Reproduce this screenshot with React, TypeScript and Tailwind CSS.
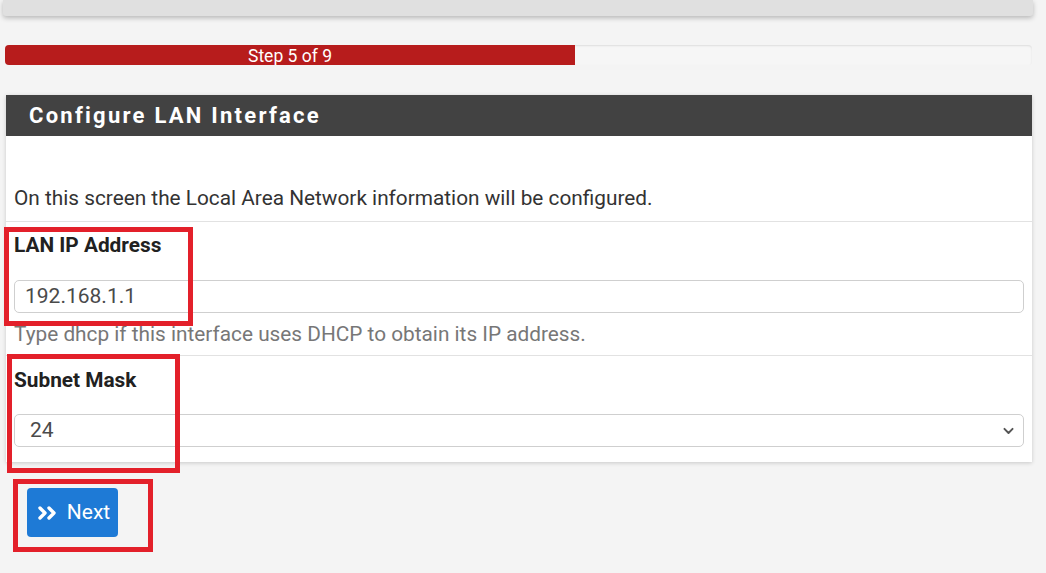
import React from "react";

export default function App() {
  return (
    <div
      className="relative w-full min-h-[573px] bg-[#f4f4f4] overflow-hidden"
      style={{ fontFamily: "Roboto, 'Liberation Sans', sans-serif" }}
    >
      {/* top bar */}
      <div className="ml-[3px] mr-[13px] h-[16px] bg-[#e0e0e0] rounded-b-[3px] shadow-[0_2px_5px_rgba(0,0,0,0.25)]" />

      {/* progress */}
      <div className="ml-[5px] mr-[14px] mt-[29px] h-[20px] rounded-[4px] bg-[#f6f6f6] shadow-[inset_0_1px_2px_rgba(0,0,0,0.1)] overflow-hidden flex">
        <div className="w-[570px] h-full bg-[#b71c1c] flex items-center justify-center pt-[4px] text-white text-[17.5px] leading-none">
          Step 5 of 9
        </div>
      </div>

      {/* panel */}
      <div className="ml-[6px] mr-[14px] mt-[30px] bg-white shadow-[0_1px_4px_rgba(0,0,0,0.18)]">
        <div className="h-[41px] bg-[#424242] flex items-center pl-[23px]">
          <span className="text-white text-[22px] font-bold tracking-[2.25px] leading-none">
            Configure LAN Interface
          </span>
        </div>
        <div className="h-[86px] border-b border-[#e2e2e2] flex items-end pb-[10px] pl-[8px]">
          <p className="text-[20.8px] leading-[26px] text-[#333]">
            On this screen the Local Area Network information will be configured.
          </p>
        </div>
        <div className="h-[134px] border-b border-[#e2e2e2] pl-[8px] pr-[8px] pt-[10px]">
          <div className="text-[20.8px] leading-[26px] font-bold text-[#212121]">LAN IP Address</div>
          <div className="mt-[22px] h-[33px] border border-[#cfcfcf] rounded-[5px] flex items-center pl-[10px] text-[21px] text-[#4a4a4a]">
            192.168.1.1
          </div>
          <div className="mt-[8px] text-[20.8px] leading-[26px] text-[#777]">
            Type dhcp if this interface uses DHCP to obtain its IP address.
          </div>
        </div>
        <div className="h-[106px] pl-[8px] pr-[8px] pt-[11px]">
          <div className="text-[20.8px] leading-[26px] font-bold text-[#212121]">Subnet Mask</div>
          <div className="mt-[21px] h-[33px] border border-[#cfcfcf] rounded-[5px] flex items-center pl-[15px] pr-[8px] text-[21px] text-[#4a4a4a]">
            <span className="flex-1">24</span>
            <svg width="13" height="13" viewBox="0 0 16 16" fill="none" stroke="#555" strokeWidth="2.4" strokeLinecap="round" strokeLinejoin="round">
              <path d="M3 6l5 5 5-5" />
            </svg>
          </div>
        </div>
      </div>

      {/* next button */}
      <div className="pl-[27px] mt-[26px]">
        <button className="w-[91px] h-[49px] bg-[#1e7ad6] rounded-[4px] flex items-center justify-center gap-[8px] pl-[2px] text-white text-[21px]">
          <svg width="22" height="16" viewBox="0 0 22 16" fill="none" stroke="white" strokeWidth="3.4" strokeLinecap="round" strokeLinejoin="round">
            <path d="M3 3l5 5-5 5" />
            <path d="M12 3l5 5-5 5" />
          </svg>
          <span>Next</span>
        </button>
      </div>

      {/* red annotation boxes */}
      <div className="absolute left-[4px] top-[227px] w-[189px] h-[99px] border-[5px] border-[#e3202a]" />
      <div className="absolute left-[7px] top-[354px] w-[173px] h-[119px] border-[5px] border-[#e3202a]" />
      <div className="absolute left-[13px] top-[479px] w-[140px] h-[73px] border-[5px] border-[#e3202a]" />
    </div>
  );
}
